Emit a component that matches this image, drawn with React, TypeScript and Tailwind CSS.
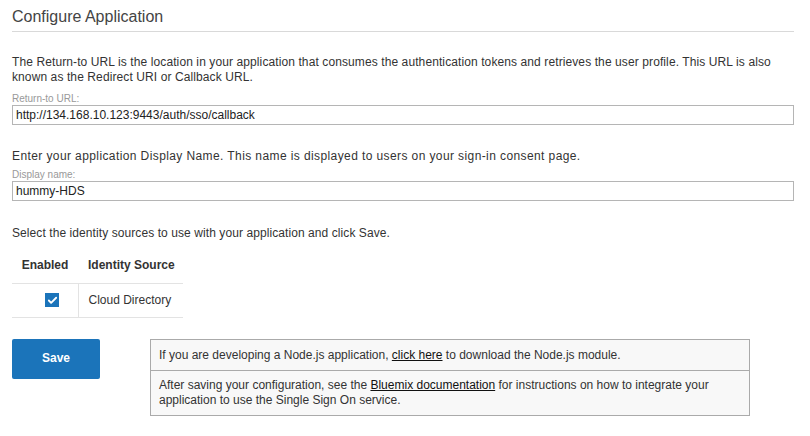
import { Check } from 'lucide-react';

function Field({ label, value }: { label: string; value: string }) {
  return (
    <div className="flex flex-col">
      <label className="text-[10px] leading-[12px] text-[#999]">{label}</label>
      <input
        readOnly
        value={value}
        className="h-[20px] w-full border border-[#b5b5b5] bg-white px-[3px] text-[12px] text-[#222] outline-none"
      />
    </div>
  );
}

export default function App() {
  return (
    <div className="min-h-[436px] w-[810px] bg-white pl-[12px] pr-[16px] font-['Liberation_Sans',Arial,sans-serif] text-[12px] leading-[15px] text-[#333]">
      <h1 className="border-b border-[#d9d9d9] pt-[7px] pb-[4px] text-[16px] leading-[20px] font-normal text-[#444]">
        Configure Application
      </h1>

      <p className="mt-[23px] tracking-[0.1px]">
        The Return-to URL is the location in your application that consumes the authentication tokens and
        retrieves the user profile. This URL is also known as the Redirect URI or Callback URL.
      </p>
      <div className="mt-[8px]">
        <Field label="Return-to URL:" value="http://134.168.10.123:9443/auth/sso/callback" />
      </div>

      <p className="mt-[24px] tracking-[0.4px]">
        Enter your application Display Name. This name is displayed to users on your sign-in consent page.
      </p>
      <div className="mt-[5px]">
        <Field label="Display name:" value="hummy-HDS" />
      </div>

      <p className="mt-[25px] tracking-[0.08px]">
        Select the identity sources to use with your application and click Save.
      </p>

      <table className="mt-[7px] w-[171px] border-collapse">
        <thead>
          <tr className="border-b border-[#e3e3e3]">
            <th className="h-[35px] w-[66px] text-center font-bold">Enabled</th>
            <th className="pl-[10px] text-left font-bold">Identity Source</th>
          </tr>
        </thead>
        <tbody>
          <tr className="border-b border-[#e3e3e3]">
            <td className="h-[34px] border-r border-[#e3e3e3] pl-[33px]">
              <span className="flex h-[14px] w-[14px] items-center justify-center bg-[#1b74ba]">
                <Check size={11} strokeWidth={4} color="white" />
              </span>
            </td>
            <td className="pl-[10px]">Cloud Directory</td>
          </tr>
        </tbody>
      </table>

      <div className="mt-[21px] flex items-start">
        <button className="h-[40px] w-[88px] rounded-[2px] bg-[#1b74ba] text-[12px] font-bold text-white">
          Save
        </button>
        <div className="ml-[50px] w-[600px] border border-[#aaa] bg-[#f8f8f8]">
          <div className="border-b border-[#aaa] px-[8px] pt-[8px] pb-[7px]">
            If you are developing a Node.js application, <a className="text-[#111] underline">click here</a> to
            download the Node.js module.
          </div>
          <div className="px-[8px] pt-[7px] pb-[7px]">
            After saving your configuration, see the <a className="text-[#111] underline">Bluemix documentation</a>{' '}
            for instructions on how to integrate your application to use the Single Sign On service.
          </div>
        </div>
      </div>
    </div>
  );
}
